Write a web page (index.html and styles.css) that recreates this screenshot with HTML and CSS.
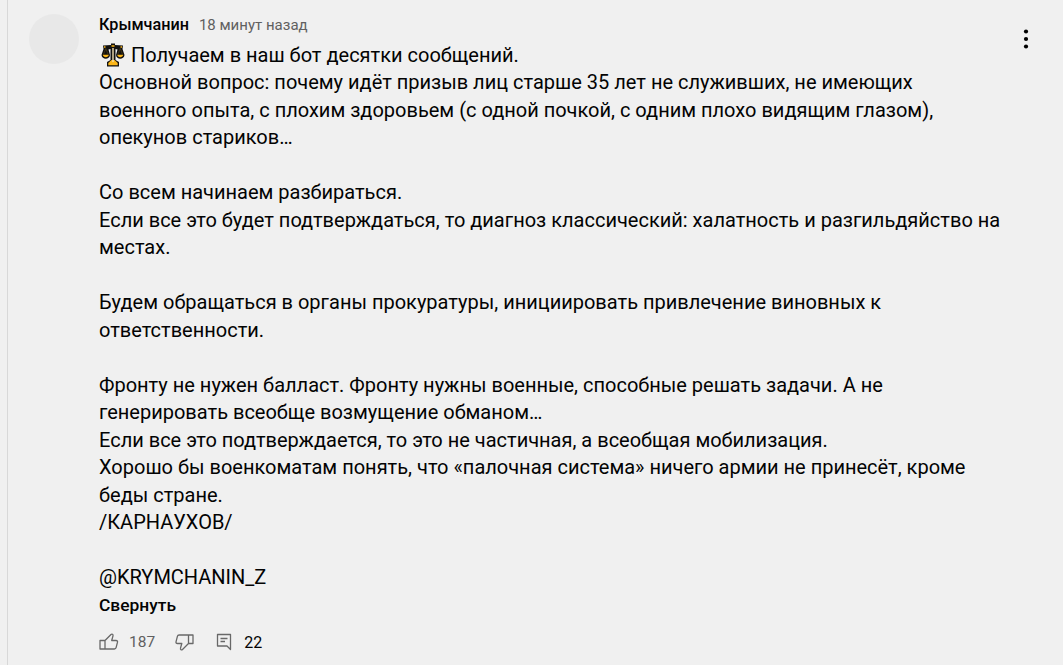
FILE: index.html
```
<!DOCTYPE html>
<html lang="ru">
<head>
    <meta charset="UTF-8">
    <meta name="viewport" content="width=device-width, initial-scale=1.0">
    <title>Комментарии</title>
    <link rel="stylesheet" href="styles.css">
</head>
<body>
    <article class="comment">
        <div class="avatar"></div>
        <div class="main">
            <header class="header">
                <span class="author">Крымчанин</span>
                <span class="time">18 минут назад</span>
            </header>
            <div class="text"><svg class="scales" viewBox="0 0 24 24">
                <path d="M2 2.500L10 2V.5H14V2L22 2.500L21.500 6L23.500 12C23 17 15.500 17 15 12L16.500 6.500L14.500 6V17L18 19V23.500H6V19L9.500 17V6L7.500 6.500L9 12C8.500 17 1 17 .5 12L2.500 6z" fill="#111"/>
                <path d="M1.800 11.800h6c-.3 3.200-5.700 3.200-6 0zM16.200 11.800h6c-.3 3.200-5.700 3.200-6 0zM10.500 17h3l3.200 3v2.200H7.300V20z" fill="#fbb619"/>
                <path d="M12 5v14" stroke="#f3dfaf" stroke-width="1.400"/>
                <path d="M10.500 3h3M3 4h1.500M19.500 4h1.500" stroke="#fbb619" stroke-width="1.300"/>
                <path d="M4.800 5.500l-2.300 6M4.800 5.500l2.300 6M19.200 5.500l-2.300 6M19.200 5.500l2.300 6" stroke="#6d5319" stroke-width=".5"/>
            </svg> Получаем в наш бот десятки сообщений.<br>Основной вопрос: почему идёт призыв лиц старше 35 лет не служивших, не имеющих<br>военного опыта, с плохим здоровьем (с одной почкой, с одним плохо видящим глазом),<br>опекунов стариков…<br><br>Со всем начинаем разбираться.<br>Если все это будет подтверждаться, то диагноз классический: халатность и разгильдяйство на<br>местах.<br><br>Будем обращаться в органы прокуратуры, инициировать привлечение виновных к<br>ответственности.<br><br>Фронту не нужен балласт. Фронту нужны военные, способные решать задачи. А не<br>генерировать всеобще возмущение обманом…<br>Если все это подтверждается, то это не частичная, а всеобщая мобилизация.<br>Хорошо бы военкоматам понять, что «палочная система» ничего армии не принесёт, кроме<br>беды стране.<br>/КАРНАУХОВ/<br><br>@KRYMCHANIN_Z</div>
            <div class="less">Свернуть</div>
            <div class="toolbar">
                <svg class="icon like" viewBox="0 0 22 22"><path d="M2 9.500h5v8.500H2zM7 9.500l6-6c1-.9 2.400 0 2 1.300L13.700 9.500h4.300c1.200 0 1.700.8 1.500 1.700l-1.400 5.500c-.2.900-.8 1.300-1.700 1.300H7"/></svg>
                <span class="count">187</span>
                <svg class="icon dislike" viewBox="0 0 22 22"><path d="M20 12.500h-4.500V4H20zM15.500 12.500l-6 6c-1 .9-2.400 0-2-1.300l1.300-4.700H4.500c-1.200 0-1.700-.8-1.500-1.700l1.400-5.500C4.600 4.400 5.200 4 6.100 4h9.400"/></svg>
                <svg class="icon reply" viewBox="0 0 22 22"><path d="M4.500 3.500h13v15l-3.500-3.500H4.500zM7.500 7.500h7M7.500 10.500h4.500"/></svg>
                <span class="replies">22</span>
            </div>
        </div>
        <svg class="menu" viewBox="0 0 24 24"><circle cx="12" cy="4.500" r="2.100"/><circle cx="12" cy="12" r="2.100"/><circle cx="12" cy="19.500" r="2.100"/></svg>
    </article>
</body>
</html>
```
FILE: styles.css
```
body {
    margin: 0;
    background: #f0f0f0;
    font-family: Roboto, Arial, sans-serif;
    color: #030303;
}
.comment {
    box-sizing: border-box;
    height: 665px;
    margin-left: 7px;
    padding: 14px 26px 0 21px;
    border-left: 1px solid #d8d8d8;
    display: flex;
    overflow: hidden;
}
.avatar {
    width: 50px;
    height: 50px;
    border-radius: 50%;
    background: #e8e8e8;
    flex: none;
}
.main {
    flex: 1;
    margin-left: 20px;
    white-space: nowrap;
}
.header {
    height: 27.500px;
    line-height: 22px;
    font-size: 16px;
}
.author {
    font-size: 16.200px;
    font-weight: 500;
    margin-right: 6px;
}
.time {
    color: #606060;
    font-size: 15px;
}
.text {
    font-size: 20px;
    line-height: 27.500px;
}
.scales {
    width: 24px;
    height: 24px;
    margin: 0 1px 0 2px;
    vertical-align: -5px;
}
.less {
    font-size: 17.400px;
    font-weight: 500;
    line-height: 27px;
}
.toolbar {
    display: flex;
    align-items: center;
    height: 47px;
    font-size: 16px;
}
.icon {
    width: 22px;
    height: 22px;
    margin-left: -1px;
    fill: none;
    stroke: #686868;
    stroke-width: 1.300;
    stroke-linejoin: round;
}
.count {
    color: #606060;
    font-size: 15.500px;
    margin: 0 19px 0 9px;
}
.reply {
    margin: 0 9px 0 18px;
}
.menu {
    width: 24px;
    height: 24px;
    margin-top: 13px;
    margin-right: -1px;
    flex: none;
}
```
